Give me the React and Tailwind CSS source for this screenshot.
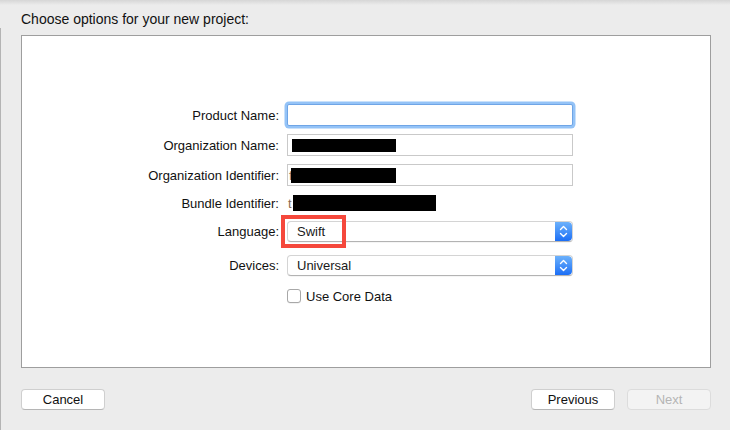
import React from "react";

const font = { fontFamily: '"Liberation Sans", Arial, sans-serif' };

function Stepper() {
  return (
    <div className="w-[17px] h-full rounded-r-[4px] bg-gradient-to-b from-[#6cb1fb] to-[#1b6ef5] flex items-center justify-center">
      <svg width="9" height="13" viewBox="0 0 9 13" fill="none" stroke="white" strokeWidth="1.4" strokeLinecap="round" strokeLinejoin="round">
        <path d="M1.5 4.5 L4.5 1.5 L7.5 4.5" />
        <path d="M1.5 8.5 L4.5 11.5 L7.5 8.5" />
      </svg>
    </div>
  );
}

function Popup({ value }) {
  return (
    <div className="w-[286px] h-[21px] flex rounded-[4px] bg-white border border-[#d4d4d4] border-b-[#b3b3b3] shadow-[0_0.5px_0.5px_rgba(0,0,0,0.08)] overflow-hidden">
      <div className="flex-1 flex items-center pl-[9px] text-[13px] text-[#1a1a1a]">{value}</div>
      <Stepper />
    </div>
  );
}

function Label({ children }) {
  return <div className="w-[265px] shrink-0 text-right pr-[8px] text-[13px] text-[#111] leading-none">{children}</div>;
}

export default function App() {
  return (
    <div style={font} className="w-[730px] h-[430px] bg-[#ececec] relative overflow-hidden text-[#111]">
      <div className="absolute top-0 left-0 right-0 h-[5px] bg-gradient-to-b from-[#d6d6d6] to-[#ececec]" />
      <div className="absolute left-0 top-[28px] bottom-0 w-[1px] bg-[#b4b4b4]" />
      <div className="pl-[21px] pt-[11px] text-[14px] leading-[17px] text-[#111]">Choose options for your new project:</div>
      <div className="ml-[21px] mt-[7px] w-[690px] h-[333px] bg-white border border-[#9e9e9e] flex flex-col pt-[68px]">
        {/* Product Name */}
        <div className="flex items-center h-[22px]">
          <Label>Product Name:</Label>
          <div className="w-[286px] h-[22px] bg-white border border-[#6fa5e6] rounded-[2px] shadow-[0_0_0_2.5px_#94c3f7]" />
        </div>
        {/* Organization Name */}
        <div className="flex items-center h-[22px] mt-[8px]">
          <Label>Organization Name:</Label>
          <div className="w-[286px] h-[22px] bg-white border border-[#c9c9c9] flex items-center pl-[4px]">
            <div className="w-[104px] h-[13px] bg-black" />
          </div>
        </div>
        {/* Organization Identifier */}
        <div className="flex items-center h-[22px] mt-[8px]">
          <Label>Organization Identifier:</Label>
          <div className="w-[286px] h-[22px] bg-white border border-[#c9c9c9] flex items-center pl-[1px]">
            <span className="text-[13px] text-[#8a6a50] leading-none">f</span>
            <div className="relative w-[105px] h-[15px] bg-black ml-[-2px]" />
          </div>
        </div>
        {/* Bundle Identifier */}
        <div className="flex items-center h-[18px] mt-[8px]">
          <Label>Bundle Identifier:</Label>
          <div className="flex items-center pl-[1px]">
            <span className="text-[13px] text-[#8a6a50] leading-none">t</span>
            <div className="relative w-[143px] h-[16px] bg-black ml-[1px]" />
          </div>
        </div>
        {/* Language */}
        <div className="flex items-center h-[21px] mt-[9px]">
          <Label>Language:</Label>
          <div className="relative">
            <Popup value="Swift" />
            <div className="absolute left-[-6px] top-[-6px] w-[65px] h-[33px] border-[4px] border-[#f5483c]" />
          </div>
        </div>
        {/* Devices */}
        <div className="flex items-center h-[21px] mt-[13px]">
          <Label>Devices:</Label>
          <Popup value="Universal" />
        </div>
        {/* Core Data */}
        <div className="flex items-center h-[14px] mt-[13px]">
          <div className="w-[265px] shrink-0" />
          <div className="w-[14px] h-[14px] bg-white border border-[#a8a8a8] rounded-[3px] shadow-[0_0.5px_0.5px_rgba(0,0,0,0.1)]" />
          <div className="ml-[5px] text-[13px] leading-none">Use Core Data</div>
        </div>
      </div>
      <div className="flex items-center mt-[21px] pl-[21px] w-[711px]">
        <div className="w-[84px] h-[21px] rounded-[4px] bg-white border border-[#cfcfcf] border-b-[#b5b5b5] flex items-center justify-center text-[13px] text-[#111]">Cancel</div>
        <div className="flex-1" />
        <div className="w-[84px] h-[21px] rounded-[4px] bg-white border border-[#cfcfcf] border-b-[#b5b5b5] flex items-center justify-center text-[13px] text-[#111]">Previous</div>
        <div className="w-[84px] h-[21px] ml-[12px] rounded-[4px] bg-[#f3f3f3] border border-[#dcdcdc] flex items-center justify-center text-[13px] text-[#b5b5b5]">Next</div>
      </div>
    </div>
  );
}
